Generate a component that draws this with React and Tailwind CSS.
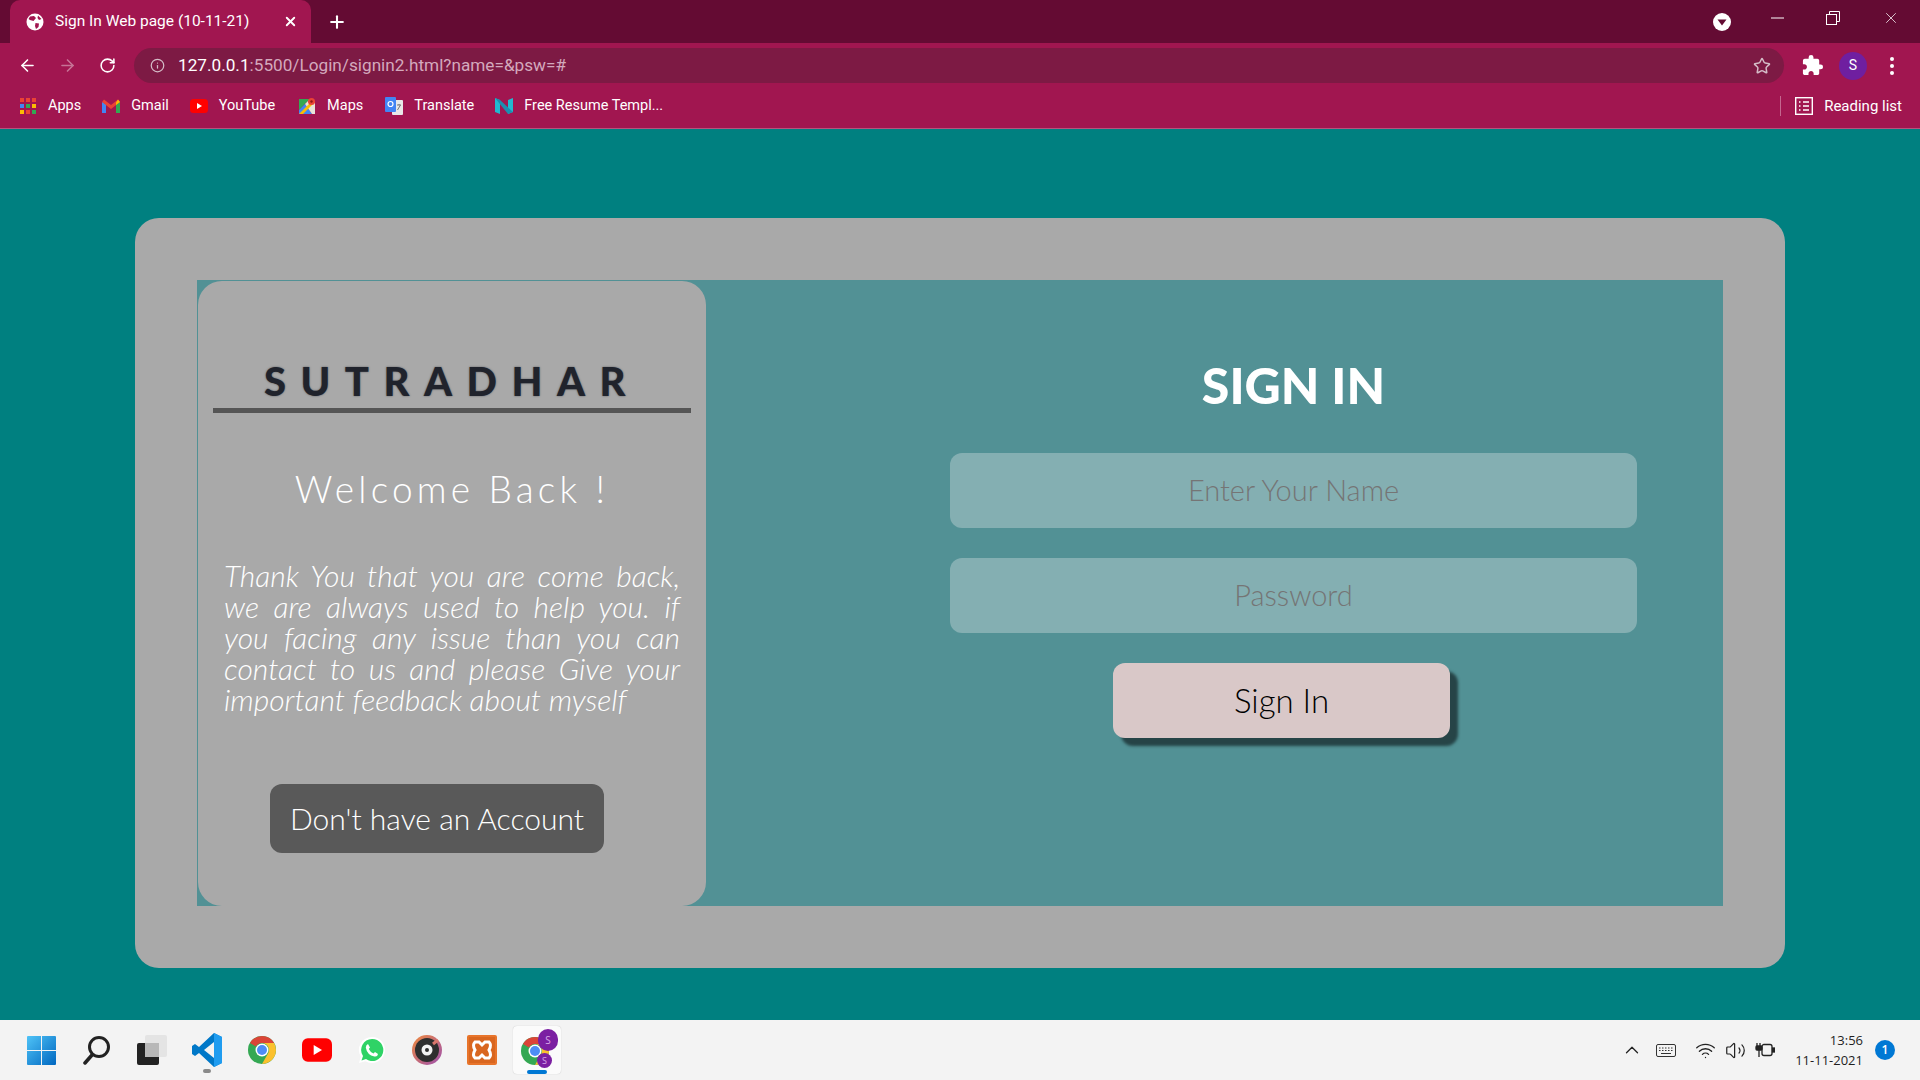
import { ArrowLeft, ArrowRight, RotateCw, Info, Star, Plus, X, ChevronUp, Volume2, Wifi } from 'lucide-react';
import { MdExtension } from 'react-icons/md';

function Globe() {
  return (
    <svg width="18" height="18" viewBox="0 0 18 18">
      <circle cx="9" cy="9" r="8.5" fill="#fff" />
      <path d="M4 3.5 L8 3 L10 5 L7.5 8 L4 7 L2.5 6Z M9.5 10 L13 10.5 L12.5 14 L10 16 L9 13Z M12 2.5 L15.5 6 L13 7 L11.5 5Z" fill="#a11650" />
    </svg>
  );
}

function AppsIcon() {
  const colors = ['#ea4335', '#ea4335', '#ea4335', '#4285f4', '#34a853', '#fbbc04', '#fbbc04', '#ea4335', '#34a853'];
  return (
    <div className="grid grid-cols-3 gap-[2px] w-[16px]">
      {colors.map((c, i) => (
        <span key={i} className="w-[4px] h-[4px]" style={{ background: c }} />
      ))}
    </div>
  );
}

function GmailIcon() {
  return (
    <svg width="18" height="14" viewBox="0 0 18 14">
      <path d="M0 3 L0 14 L4 14 L4 5Z" fill="#4285f4" />
      <path d="M18 3 L18 14 L14 14 L14 5Z" fill="#34a853" />
      <path d="M0 3 L2 0.5 L9 6 L16 0.5 L18 3 L9 10Z" fill="#ea4335" />
      <path d="M14 3.5 L16 0.5 L18 3 L14 6Z" fill="#fbbc04" />
    </svg>
  );
}

function YoutubeIcon({ w = 18, h = 14 }) {
  return (
    <svg width={w} height={h} viewBox="0 0 18 14">
      <rect width="18" height="14" rx="3.5" fill="#f00" />
      <path d="M7 4 L12 7 L7 10Z" fill="#fff" />
    </svg>
  );
}

function MapsIcon() {
  return (
    <svg width="18" height="18" viewBox="0 0 18 18">
      <path d="M1 2 H12 L1 13Z" fill="#34a853" />
      <path d="M1 13 L7 7 L14 17 H1Z" fill="#4285f4" />
      <path d="M7 7 L12 2 L17 6 V17 H14Z" fill="#e8e4d8" />
      <path d="M1 17 L15 3 L17 5 L5 17Z" fill="#fbbc04" />
      <circle cx="13.5" cy="4.5" r="3.5" fill="#ea4335" />
      <circle cx="13.5" cy="4.5" r="1.2" fill="#8c1a14" />
    </svg>
  );
}

function TranslateIcon() {
  return (
    <svg width="18" height="18" viewBox="0 0 18 18">
      <rect x="7" y="3" width="11" height="15" rx="1" fill="#e8e8e8" />
      <rect x="0" y="0" width="11" height="15" rx="1" fill="#4285f4" />
      <circle cx="5.5" cy="7" r="2.5" fill="none" stroke="#fff" strokeWidth="1.2" />
      <path d="M12 8 H16 M14 7 V8 M15.5 8 L12.5 13" stroke="#777" strokeWidth="1" fill="none" />
    </svg>
  );
}

function NIcon() {
  return (
    <svg width="18" height="18" viewBox="0 0 18 18">
      <path d="M0 1 L5 3 V17 L0 15Z" fill="#22b8cf" />
      <path d="M13 3 L18 1 V15 L13 17Z" fill="#22b8cf" />
      <path d="M0 1 L5 3 L18 15 L13 17Z" fill="#1a8fb0" />
    </svg>
  );
}

function ReadingIcon() {
  return (
    <svg width="18" height="18" viewBox="0 0 18 18" fill="none" stroke="#fff" strokeWidth="1.4">
      <rect x="0.7" y="0.7" width="16.6" height="16.6" />
      <path d="M4 5 H5.5 M8 5 H14 M4 9 H5.5 M8 9 H14 M4 13 H5.5 M8 13 H14" />
    </svg>
  );
}

function Bookmark({ icon, label, className }) {
  return (
    <div className={`flex items-center gap-[11px] ${className}`}>
      <span className="w-[18px] flex justify-center">{icon}</span>
      <span className="text-[14.5px] text-white">{label}</span>
    </div>
  );
}

function WindowsIcon() {
  return (
    <svg width="29" height="29" viewBox="0 0 29 29">
      <defs>
        <linearGradient id="win" x1="0" y1="0" x2="1" y2="1">
          <stop offset="0" stopColor="#4fc3f7" />
          <stop offset="1" stopColor="#0067c0" />
        </linearGradient>
      </defs>
      <path d="M0 1 Q0 0 1 0 H14 V14 H0Z M15 0 H28 Q29 0 29 1 V14 H15Z M0 15 H14 V29 H1 Q0 29 0 28Z M15 15 H29 V28 Q29 29 28 29 H15Z" fill="url(#win)" />
    </svg>
  );
}

function SearchIcon() {
  return (
    <svg width="28" height="30" viewBox="0 0 28 30" fill="none" stroke="#222" strokeLinecap="round">
      <circle cx="16" cy="12" r="9.5" strokeWidth="3" />
      <path d="M9 20 L2 28" strokeWidth="3.5" />
    </svg>
  );
}

function TaskViewIcon() {
  return (
    <svg width="30" height="30" viewBox="0 0 30 30">
      <rect x="0" y="8" width="22" height="22" rx="2" fill="#222" />
      <rect x="8" y="0" width="22" height="22" rx="2" fill="#e4e4e4" />
      <rect x="8" y="8" width="14" height="14" fill="#b8b8b8" />
    </svg>
  );
}

function VscodeIcon() {
  return (
    <svg width="30" height="34" viewBox="0 0 30 34">
      <path d="M22 0 L30 4 V30 L22 34 L7 20 L3 23 L0 21 V13 L3 11 L7 14Z M22 9 L12 17 L22 25Z" fill="#0078c8" />
      <path d="M22 0 L30 4 V30 L22 34Z" fill="#1f9cf0" />
    </svg>
  );
}

function ChromeIcon({ size = 28 }) {
  return (
    <svg width={size} height={size} viewBox="0 0 28 28">
      <circle cx="14" cy="14" r="14" fill="#34a853" />
      <path d="M14 0 A14 14 0 0 1 26.1 7 H14 A7 7 0 0 0 7.9 10.5 L2 7 A14 14 0 0 1 14 0Z" fill="#db4437" />
      <path d="M26.1 7 A14 14 0 0 1 14 28 L20 17.5 A7 7 0 0 0 14 7Z" fill="#fbc02d" />
      <circle cx="14" cy="14" r="6.5" fill="#fff" />
      <circle cx="14" cy="14" r="5" fill="#4d8df5" />
    </svg>
  );
}

function WhatsappIcon() {
  return (
    <svg width="28" height="28" viewBox="0 0 28 28">
      <path d="M14 1 A13 13 0 1 1 7.5 25.3 L1 27 L2.8 20.7 A13 13 0 0 1 14 1Z" fill="#fff" />
      <path d="M14 3 A11 11 0 1 1 8 23 L3.5 24.5 L5 20 A11 11 0 0 1 14 3Z" fill="#2fd366" />
      <path d="M10 8 L12 11.5 L10.8 13 Q12.5 16.5 15.5 17.5 L17 16 L20 18 Q19.5 21 16.5 20.5 Q9 19 7.8 11.5 Q8 8.5 10 8Z" fill="#fff" />
    </svg>
  );
}

function MusicIcon() {
  return (
    <svg width="30" height="30" viewBox="0 0 30 30">
      <defs>
        <linearGradient id="ring" x1="0" y1="0" x2="1" y2="1">
          <stop offset="0" stopColor="#f08a3c" />
          <stop offset="1" stopColor="#9c4fb0" />
        </linearGradient>
      </defs>
      <circle cx="15" cy="15" r="15" fill="url(#ring)" />
      <circle cx="15" cy="15" r="12" fill="#2e2e2e" />
      <circle cx="15" cy="15" r="5.5" fill="#f2f2f2" />
      <circle cx="15" cy="15" r="2" fill="#2e2e2e" />
      <path d="M21 9 L26 5" stroke="#d9776c" strokeWidth="3" />
    </svg>
  );
}

function XamppIcon() {
  return (
    <svg width="30" height="30" viewBox="0 0 30 30">
      <rect width="30" height="30" rx="2" fill="#e8742a" />
      <rect x="2" y="2" width="26" height="26" fill="#d9661f" />
      <path d="M8 7 H12 L15 10 L18 7 H22 Q25 10 22 15 Q25 20 22 23 H18 L15 20 L12 23 H8 Q5 20 8 15 Q5 10 8 7Z" fill="none" stroke="#fff" strokeWidth="3" />
    </svg>
  );
}

function ActiveChrome() {
  return (
    <div className="relative w-[48px] h-[48px] bg-[#fbfbfb] rounded-[4px] shadow-[0_0_1px_rgba(0,0,0,0.25)] flex items-center justify-center">
      <span className="mr-[4px] mt-[2px]"><ChromeIcon size={28} /></span>
      <span className="absolute right-[3px] top-[3px] w-[20px] h-[22px] rounded-full bg-[#7b1fa2] text-[10px] text-[#d9a9e8] flex items-center justify-center">S</span>
      <span className="absolute right-[9px] top-[27px] w-[15px] h-[15px] rounded-full bg-[#7b1fa2] text-[9px] text-[#d9a9e8] flex items-center justify-center">S</span>
      <span className="absolute left-[14px] bottom-0 w-[20px] h-[4px] rounded-full bg-[#0078d4]" />
    </div>
  );
}

function TaskItem({ children, dot }) {
  return (
    <div className="relative w-[55px] h-[48px] flex items-center justify-center">
      {children}
      {dot && <span className="absolute left-[24px] bottom-[1px] w-[8px] h-[4px] rounded-full bg-[#8a8a8a]" />}
    </div>
  );
}

export default function App() {
  return (
    <div className="h-screen flex flex-col overflow-hidden font-['Roboto',sans-serif]">
      {/* Tab strip */}
      <div className="h-[43px] bg-[#640b33] flex items-end pl-[10px] text-white">
        <div className="w-[301px] h-[43px] bg-[#a11650] rounded-t-[10px] flex items-center pl-[16px]">
          <Globe />
          <span className="ml-[11px] text-[15.5px] w-[228px] whitespace-nowrap">Sign In Web page (10-11-21)</span>
          <X size={15} strokeWidth={3} />
        </div>
        <div className="h-[43px] flex items-center ml-[16px]">
          <Plus size={20} strokeWidth={2.5} />
        </div>
        <div className="h-[43px] flex items-center ml-auto">
          <svg width="18" height="18" viewBox="0 0 18 18">
            <circle cx="9" cy="9" r="9" fill="#fff" />
            <path d="M4.5 6.5 H13.5 L9 12.5Z" fill="#640b33" />
          </svg>
          <div className="flex items-center pb-[7px]">
            <svg width="13" height="2" viewBox="0 0 13 2" className="ml-[40px]">
              <path d="M0 1 H13" stroke="#fff" strokeWidth="1" />
            </svg>
            <svg width="14" height="14" viewBox="0 0 14 14" fill="none" stroke="#fff" strokeWidth="1" className="ml-[42px]">
              <rect x="0.5" y="3.5" width="10" height="10" />
              <path d="M3.5 3 V0.5 H13.5 V10.5 H11" />
            </svg>
            <X size={18} strokeWidth={1} className="ml-[42px] mr-[20px]" />
          </div>
        </div>
      </div>

      {/* Toolbar */}
      <div className="h-[42px] bg-[#a11650] flex items-center pl-[18px] pt-[3px] text-white">
        <ArrowLeft size={19} strokeWidth={2} />
        <ArrowRight size={19} strokeWidth={2} className="ml-[21px] opacity-40" />
        <RotateCw size={17} strokeWidth={2.2} className="ml-[22px]" />
        <div className="ml-[18px] w-[1650px] h-[35px] rounded-full bg-[#7d1a44] flex items-center pl-[16px] pr-[13px]">
          <Info size={15} className="text-[#d4bcc7]" />
          <span className="ml-[13px] text-[17.2px] text-white whitespace-nowrap">
            127.0.0.1<span className="text-[#d4a9bd]">:5500/Login/signin2.html?name=&amp;psw=#</span>
          </span>
          <Star size={18} className="ml-auto text-[#d4bcc7]" />
        </div>
        <MdExtension size={23} className="ml-[17px]" />
        <div className="ml-[15px] w-[28px] h-[28px] rounded-full bg-[#6f1fa0] flex items-center justify-center text-[14px]">S</div>
        <div className="ml-[23px] flex flex-col gap-[3px]">
          <span className="w-[4px] h-[4px] rounded-full bg-white" />
          <span className="w-[4px] h-[4px] rounded-full bg-white" />
          <span className="w-[4px] h-[4px] rounded-full bg-white" />
        </div>
      </div>

      {/* Bookmarks bar */}
      <div className="h-[44px] bg-[#a11650] border-b border-[#b5557d] flex items-center pl-[19px] pb-[1px]">
        <Bookmark icon={<AppsIcon />} label="Apps" />
        <Bookmark icon={<GmailIcon />} label="Gmail" className="ml-[21px]" />
        <Bookmark icon={<YoutubeIcon />} label="YouTube" className="ml-[21px]" />
        <Bookmark icon={<MapsIcon />} label="Maps" className="ml-[23px]" />
        <Bookmark icon={<TranslateIcon />} label="Translate" className="ml-[22px]" />
        <Bookmark icon={<NIcon />} label="Free Resume Templ..." className="ml-[21px]" />
        <div className="ml-auto w-px h-[20px] bg-[#c4678f]" />
        <span className="ml-[14px]"><ReadingIcon /></span>
        <span className="ml-[11px] mr-[18px] text-[15px] text-white">Reading list</span>
      </div>

      {/* Page */}
      <div className="flex-1 bg-[#008080] pt-[89px] pl-[135px] font-['Lato',sans-serif]">
        <div className="w-[1650px] h-[750px] bg-[#a9a9a9] rounded-[24px] pt-[62px] pl-[62px]">
          <div className="w-[1526px] h-[626px] bg-[#529195] flex">
            <div className="ml-px mt-px w-[508px] h-[625px] bg-[#a9a9a9] rounded-[24px] flex flex-col">
              <h1 className="mx-[15px] mt-[60px] h-[72px] pt-[12px] flex items-center justify-center border-b-[5px] border-[#555555] text-[40px] font-black tracking-[14.5px] text-[#20232c] [text-shadow:0_0_2px_rgba(32,35,44,0.6)]">
                SUTRADHAR
              </h1>
              <h2 className="mt-[53px] text-center text-[37px] leading-[45px] font-light tracking-[4.2px] text-white">
                Welcome Back !
              </h2>
              <p className="mt-[49px] mx-[26px] text-[30px] leading-[31px] italic font-light text-justify text-white">
                Thank You that you are come back, we are always used to help you. if you facing any issue than you can contact to us and please Give your important feedback about myself
              </p>
              <button className="mt-[69px] ml-[72px] w-[334px] h-[69px] rounded-[12px] bg-[#595959] text-white text-[30px] font-light">
                Don&apos;t have an Account
              </button>
            </div>

            <div className="ml-[244px] w-[687px] flex flex-col items-center">
              <h2 className="mt-[75px] h-[60px] flex items-center text-[50px] font-black text-white">SIGN IN</h2>
              <input
                placeholder="Enter Your Name"
                className="mt-[38px] w-[687px] h-[75px] pb-[3px] rounded-[12px] bg-[#84afb2] text-center text-[29px] font-light placeholder:text-[#757575] outline-none"
              />
              <input
                placeholder="Password"
                className="mt-[30px] w-[687px] h-[75px] pb-[3px] rounded-[12px] bg-[#84afb2] text-center text-[29px] font-light placeholder:text-[#757575] outline-none"
              />
              <button className="mt-[30px] mr-[24px] w-[337px] h-[75px] rounded-[12px] bg-[#d9c8c8] text-black text-[33px] font-light shadow-[8px_8px_3px_#264447]">
                Sign In
              </button>
            </div>
          </div>
        </div>
      </div>

      {/* Windows taskbar */}
      <div className="h-[60px] bg-[#f3f3f3] flex items-center pl-[14px] font-['Open_Sans',sans-serif]">
        <TaskItem><WindowsIcon /></TaskItem>
        <TaskItem><SearchIcon /></TaskItem>
        <TaskItem><TaskViewIcon /></TaskItem>
        <TaskItem dot><VscodeIcon /></TaskItem>
        <TaskItem><ChromeIcon /></TaskItem>
        <TaskItem><YoutubeIcon w={30} h={24} /></TaskItem>
        <TaskItem><WhatsappIcon /></TaskItem>
        <TaskItem><MusicIcon /></TaskItem>
        <TaskItem><XamppIcon /></TaskItem>
        <div className="ml-[4px]"><ActiveChrome /></div>

        <ChevronUp size={22} strokeWidth={1.4} className="ml-auto text-[#222]" />
        <svg width="20" height="13" viewBox="0 0 20 13" fill="none" stroke="#333" className="ml-[13px]">
          <rect x="0.5" y="0.5" width="19" height="12" rx="1.5" />
          <path d="M3 4 H17 M3 6.5 H17" strokeDasharray="1.5 1.5" />
          <path d="M5 9.5 H15" />
        </svg>
        <Wifi size={21} strokeWidth={1.5} className="ml-[19px] text-[#222]" />
        <Volume2 size={21} strokeWidth={1.4} className="ml-[9px] text-[#222]" />
        <svg width="20" height="16" viewBox="0 0 20 16" fill="none" stroke="#222" strokeWidth="1.3" className="ml-[9px]">
          <rect x="7" y="2.5" width="10" height="11" rx="2" />
          <rect x="17.5" y="6" width="2" height="4" fill="#222" />
          <rect x="1" y="4" width="6" height="4" rx="1" fill="#222" />
          <path d="M2 1 V4 M5 1 V4 M4 8 V15" />
        </svg>
        <div className="ml-[22px] w-[66px] flex flex-col items-end text-[13px] leading-[20px] text-[#1f1f1f] whitespace-nowrap">
          <span>13:56</span>
          <span>11-11-2021</span>
        </div>
        <div className="ml-[12px] mr-[25px] w-[20px] h-[20px] rounded-full bg-[#0078d4] text-white text-[12px] font-semibold flex items-center justify-center">1</div>
      </div>
    </div>
  );
}
